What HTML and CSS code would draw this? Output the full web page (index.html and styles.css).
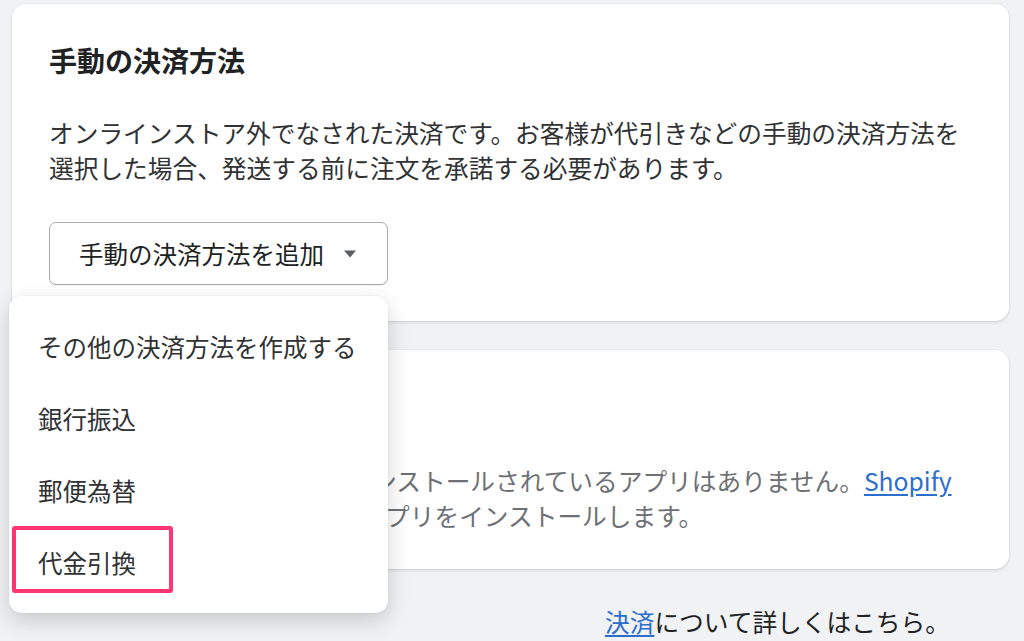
FILE: index.html
```html
<!DOCTYPE html>
<html lang="ja">
<head>
<meta charset="utf-8">
<link rel="stylesheet" href="styles.css">
</head>
<body>
<div class="page">
  <section class="card">
    <h2 class="card-title">手動の決済方法</h2>
    <p class="card-text">オンラインストア外でなされた決済です。お客様が代引きなどの手動の決済方法を<br>選択した場合、発送する前に注文を承諾する必要があります。</p>
    <button class="select-btn" type="button">
      <span>手動の決済方法を追加</span>
      <svg class="caret" width="14" height="8" viewBox="0 0 14 8"><path d="M1 0.5h12L7 7.5z" fill="#5c5f62"/></svg>
    </button>
  </section>

  <section class="card">
    <h2 class="card-title">決済アプリ</h2>
    <p class="card-text muted"><span class="fit-a">他の決済プロバイダーとして</span>インストールされているアプリはありません。<a href="#" class="link">Shopify</a><br><span class="fit-b">App Storeにアクセスして決済ア</span>プリをインストールします。</p>
  </section>

  <p class="footer"><a href="#" class="link">決済</a>について詳しくはこちら。</p>

  <div class="popover">
    <div class="item">その他の決済方法を作成する</div>
    <div class="item">銀行振込</div>
    <div class="item">郵便為替</div>
    <div class="item">代金引換<span class="highlight"></span></div>
  </div>
</div>
</body>
</html>
```

FILE: styles.css
```css
* { box-sizing: border-box; }

html, body {
  margin: 0;
  padding: 0;
  background: #f1f2f4;
  height: 641px;
  overflow: hidden;
}

body {
  font-family: "Noto Sans CJK JP", "Noto Sans", sans-serif;
  color: #202223;
}

.page {
  position: relative;
  padding: 4px 15px 0 12px;
  display: flex;
  flex-direction: column;
  gap: 29px;
}

.card {
  background: #ffffff;
  border-radius: 14px;
  box-shadow: 0 0 0 1px rgba(63, 63, 68, 0.04), 0 2px 3px rgba(63, 63, 68, 0.12);
  padding: 36px 37px 36px 37px;
}

.card-title {
  margin: 0;
  font-size: 28px;
  line-height: 40px;
  font-weight: 700;
  color: #202223;
}

.card-text {
  margin: 35px 0 0;
  font-size: 24.7px;
  line-height: 35px;
  color: #303234;
  white-space: nowrap;
}

.card-text.muted {
  color: #6d7175;
  margin-top: 37px;
}

.fit-a { letter-spacing: -1.6px; }
.fit-b { letter-spacing: -1.1px; }

.link {
  color: #2c6ecb;
  text-decoration: underline;
  text-underline-offset: 3px;
}

.select-btn {
  margin-top: 37px;
  display: inline-flex;
  align-items: center;
  gap: 19px;
  height: 63px;
  padding: 0 30px 0 29px;
  background: #ffffff;
  border: 1.5px solid #a7abb1;
  border-radius: 7px;
  font-family: inherit;
  font-size: 24.5px;
  color: #202223;
  box-shadow: 0 1px 0 rgba(0, 0, 0, 0.05);
}

.caret { display: block; }

.footer {
  margin: 6px 0 0;
  padding-left: 593px;
  font-size: 24.7px;
  line-height: 35px;
  color: #202223;
}

.popover {
  position: absolute;
  left: 9px;
  top: 296px;
  width: 379px;
  height: 317px;
  background: #ffffff;
  border-radius: 13px;
  box-shadow: 0 0 0 1px rgba(63, 63, 68, 0.03), 0 8px 22px rgba(0, 0, 0, 0.17);
  padding: 14px 0 0;
  display: flex;
  flex-direction: column;
}

.item {
  position: relative;
  height: 72px;
  display: flex;
  align-items: center;
  padding-left: 29px;
  font-size: 24.5px;
  color: #303234;
}

.highlight {
  position: absolute;
  left: 3px;
  top: 0;
  width: 161px;
  height: 67px;
  border: 4px solid #fd3571;
  border-radius: 3px;
}
```
